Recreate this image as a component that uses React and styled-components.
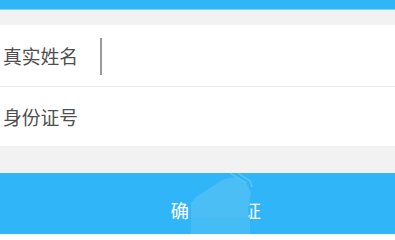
import React from 'react';
import styled, { createGlobalStyle } from 'styled-components';

const GlobalStyle = createGlobalStyle`
  body {
    margin: 0;
    background: #fff;
    font-family: "Noto Sans CJK SC", "Noto Sans", sans-serif;
  }
`;

const Page = styled.div`
  width: 395px;
  height: 234px;
  overflow: hidden;
  display: flex;
  flex-direction: column;
`;

const TopBar = styled.div`
  height: 9px;
  background: #30b6f7;
  border-bottom: 1px solid #7fd0e8;
`;

const Gap = styled.div`
  height: ${p => p.h}px;
  background: #f2f2f2;
`;

const Form = styled.div`
  background: #fff;
`;

const Row = styled.div`
  height: ${p => p.h}px;
  display: flex;
  align-items: center;
  padding-left: 3px;
  border-bottom: ${p => (p.divider ? '1px solid #ebebeb' : 'none')};
`;

const Label = styled.span`
  font-size: 18.8px;
  color: #4f4f4f;
  width: 97px;
  line-height: 1;
  margin-top: 2px;
`;

const Caret = styled.span`
  width: 2px;
  height: 37px;
  background: #9a9a9a;
  margin-top: 2px;
`;

const Button = styled.button`
  position: relative;
  flex: 1;
  border: 0;
  margin: 0;
  padding: 12px 0 0 42px;
  background: #30b6f8;
  color: #fff;
  font-family: inherit;
  font-size: 18.5px;
  letter-spacing: 5.5px;
  display: flex;
  align-items: center;
  justify-content: center;
  overflow: hidden;
`;

const Mark = styled.svg`
  position: absolute;
  left: 186px;
  top: 0;
`;

function Watermark() {
  return (
    <Mark width="80" height="61" viewBox="0 0 80 61">
      <path
        d="M5 61 L5 30 L10 24 L24 15 L38 6 L50 4 L60 9 L65 20 L62 36 L64 61 Z"
        fill="#4bbef5"
      />
      <path d="M5 45 L64 45 L64 61 L5 61 Z" fill="#44bcf6" />
      <path d="M44 0 L60 10" stroke="#62c6f3" strokeWidth="1.2" fill="none" />
      <path d="M52 0 L64 8 L66 14" stroke="#62c6f3" strokeWidth="1.2" fill="none" />
    </Mark>
  );
}

export default function App() {
  return (
    <Page>
      <GlobalStyle />
      <TopBar />
      <Gap h={15} />
      <Form>
        <Row h={61} divider>
          <Label>真实姓名</Label>
          <Caret />
        </Row>
        <Row h={59}>
          <Label>身份证号</Label>
        </Row>
      </Form>
      <Gap h={27} />
      <Button>
        确认验证
        <Watermark />
      </Button>
    </Page>
  );
}
